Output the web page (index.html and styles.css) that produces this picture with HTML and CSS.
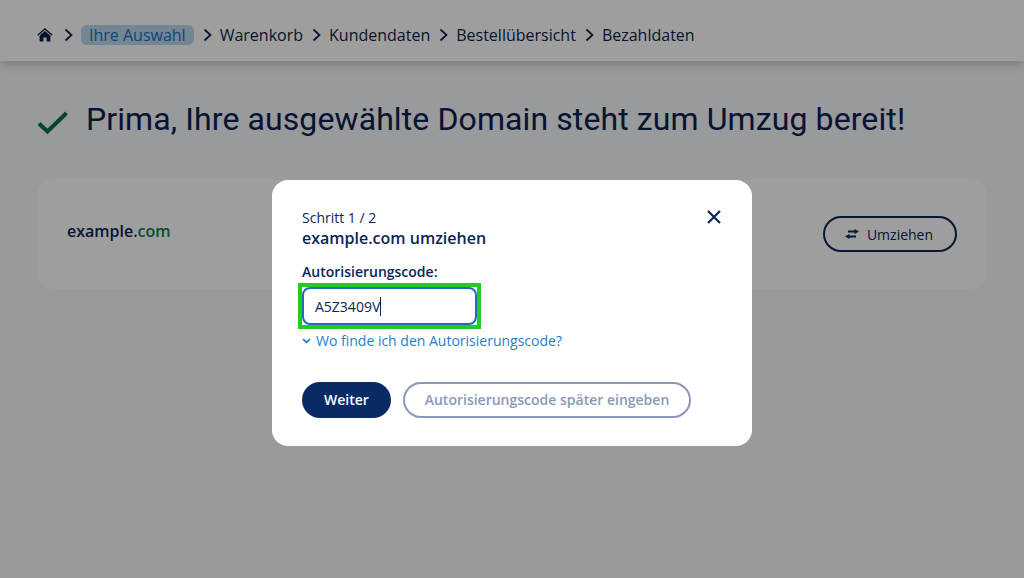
FILE: index.html
```html
<!DOCTYPE html>
<html lang="de">
<head>
<meta charset="utf-8">
<title>Domain umziehen</title>
<link rel="stylesheet" href="styles.css">
</head>
<body>
<header class="topbar">
  <nav class="crumbs">
    <svg class="home" viewBox="0 0 16 14" width="16" height="14"><path d="M.7 7.200 8 .9 15.300 7.200" fill="none" stroke="#0c1f48" stroke-width="1.300"/><path d="M8 3 2.600 7.600V13.600H6.400V9.600H9.600V13.600H13.400V7.600Z" fill="#0c1f48"/></svg>
    <svg class="sep" viewBox="0 0 9 14" width="9" height="14"><path d="M1.500 1.500 7.500 7l-6 5.500" /></svg>
    <span class="crumb active">Ihre Auswahl</span>
    <svg class="sep" viewBox="0 0 9 14" width="9" height="14"><path d="M1.500 1.500 7.500 7l-6 5.500" /></svg>
    <span class="crumb">Warenkorb</span>
    <svg class="sep" viewBox="0 0 9 14" width="9" height="14"><path d="M1.500 1.500 7.500 7l-6 5.500" /></svg>
    <span class="crumb">Kundendaten</span>
    <svg class="sep" viewBox="0 0 9 14" width="9" height="14"><path d="M1.500 1.500 7.500 7l-6 5.500" /></svg>
    <span class="crumb">Bestellübersicht</span>
    <svg class="sep" viewBox="0 0 9 14" width="9" height="14"><path d="M1.500 1.500 7.500 7l-6 5.500" /></svg>
    <span class="crumb">Bezahldaten</span>
  </nav>
</header>
<main class="content">
  <div class="headline">
    <svg class="check" viewBox="0 0 32 24" width="32" height="24"><path d="M2 13.500 10.500 21.500 29.500 3" /></svg>
    <h1>Prima, Ihre ausgewählte Domain steht zum Umzug bereit!</h1>
  </div>
  <section class="card">
    <div class="domain">example<span class="dot">.</span><span class="tld">com</span></div>
    <button class="move" type="button">
      <svg viewBox="0 0 14 10" width="14" height="10"><path d="M3 1.500H9.500V0L14 2.500 9.500 5V3.500H3ZM11 6.500H4.500V5L0 7.500 4.500 10V8.500H11Z" fill="#0a2558"/></svg>
      Umziehen
    </button>
  </section>
</main>
<div class="overlay">
  <div class="modal">
    <div class="modal-head">
      <div>
        <div class="step">Schritt 1 / 2</div>
        <h2>example.com umziehen</h2>
      </div>
      <svg class="close" viewBox="0 0 14 14" width="14" height="14"><path d="M1 1 13 13M13 1 1 13" /></svg>
    </div>
    <label class="label" for="code">Autorisierungscode:</label>
    <div class="highlight">
      <div class="field" id="code"><span>A5Z3409V</span><i class="caret"></i></div>
    </div>
    <a class="help" href="#">
      <svg viewBox="0 0 10 7" width="9" height="6"><path d="M1 1.200 5 5 9 1.200" /></svg>
      Wo finde ich den Autorisierungscode?
    </a>
    <div class="actions">
      <button class="primary" type="button">Weiter</button>
      <button class="secondary" type="button">Autorisierungscode später eingeben</button>
    </div>
  </div>
</div>
</body>
</html>
```
FILE: styles.css
```css
* { box-sizing: border-box; }
html, body { margin: 0; height: 100%; }
body {
  width: 1024px;
  height: 578px;
  overflow: hidden;
  background: #f7f8fa;
  color: #0a2558;
  font-family: "Open Sans", "Noto Sans", sans-serif;
}
.topbar {
  height: 61px;
  background: #fff;
  box-shadow: 0 2px 10px rgba(0, 0, 0, .25);
  padding: 24px 0 0 37px;
}
.crumbs {
  display: flex;
  align-items: center;
  height: 22px;
  font-size: 16px;
  color: #0c1f48;
}
.home { margin-right: 11px; }
.sep { fill: none; stroke: #0c1f48; stroke-width: 1.700; margin-right: 8px; flex: none; }
.crumb { margin-right: 9px; line-height: 22px; }
.active {
  background: #b9d9ef;
  color: #1a6dc0;
  border-radius: 6px;
  padding: 0 8px;
  height: 20px;
  line-height: 20px;
  margin-right: 9px;
}
.content { padding: 0 37px; }
.headline {
  display: flex;
  align-items: center;
  margin-top: 34px;
  height: 48px;
}
.check { fill: none; stroke: #0a7040; stroke-width: 4; margin-right: 17px; margin-top: 5px; flex: none; }
h1 {
  margin: 0;
  font-family: Roboto, sans-serif;
  font-size: 32px;
  letter-spacing: .1px;
  line-height: 48px;
  font-weight: 400;
  color: #0a2150;
  white-space: nowrap;
}
.card {
  margin-top: 36px;
  height: 110px;
  width: 950px;
  background: #fff;
  border-radius: 16px;
  display: flex;
  align-items: center;
  justify-content: space-between;
  padding: 0 30px;
}
.domain { font-size: 16px; font-weight: 600; margin-top: -6px; }
.tld { color: #0a8048; }
.move {
  height: 36px;
  width: 134px;
  border: 2px solid #0a2558;
  border-radius: 18px;
  background: none;
  color: #0a2558;
  font: 500 14px "Open Sans", sans-serif;
  display: flex;
  align-items: center;
  justify-content: center;
  gap: 8px;
  padding: 0 2px 0 0;
}
.overlay {
  position: absolute;
  inset: 0;
  background: rgba(0, 0, 0, .38);
  display: flex;
  justify-content: center;
  align-items: flex-start;
  padding-top: 180px;
}
.modal {
  width: 480px;
  height: 266px;
  background: #fff;
  border-radius: 16px;
  padding: 29px 30px 0;
  color: #0a2558;
}
.modal-head { display: flex; justify-content: space-between; align-items: flex-start; }
.step { font-size: 14px; line-height: 18px; }
h2 { margin: 0; font-size: 16px; line-height: 22px; font-weight: 600; }
.close { fill: none; stroke: #0a2558; stroke-width: 2.200; margin: 1px 1px 0 0; }
.label { display: block; margin-top: 13px; font-size: 14px; line-height: 20px; font-weight: 600; }
.highlight {
  margin: 1px 0 0 -4px;
  width: 183px;
  height: 46px;
  border: 4px solid #22cc22;
}
.field {
  height: 38px;
  border: 2px solid #1a6dc0;
  border-radius: 8px;
  font-size: 14px;
  display: flex;
  align-items: center;
  padding-left: 11px;
  color: #0a2558;
}
.caret { display: block; width: 1px; height: 19px; background: #0a2558; }
.help {
  display: flex;
  align-items: center;
  gap: 5px;
  margin-top: 2px;
  color: #1a7fd4;
  font-size: 14px;
  line-height: 20px;
  text-decoration: none;
}
.help svg { fill: none; stroke: #1a7fd4; stroke-width: 2; }
.actions { display: flex; gap: 12px; margin-top: 31px; }
.primary, .secondary {
  height: 36px;
  border-radius: 18px;
  font: 600 14px "Open Sans", sans-serif;
  padding: 0 0 2px;
}
.primary { width: 89px; background: #0a2a66; color: #fff; border: 0; }
.secondary { width: 288px; background: #fff; color: #8a99b8; border: 2px solid #8a99b8; }
```
